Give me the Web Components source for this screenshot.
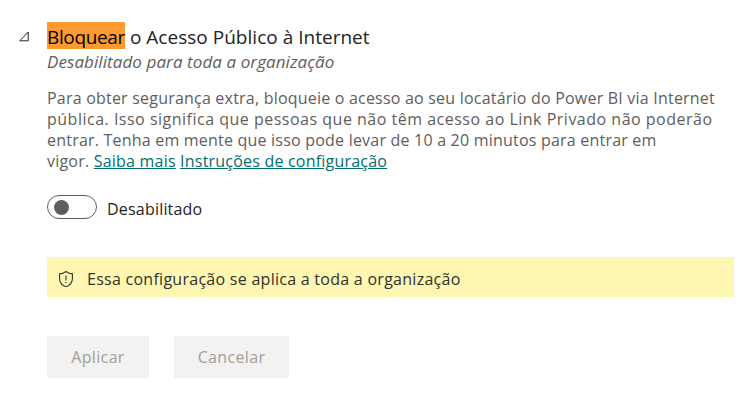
<!DOCTYPE html>
<html lang="pt">
<head>
<meta charset="utf-8">
<title>Bloquear</title>
<style>
  html,body{margin:0;padding:0;background:#fff;}
  body{font-family:"Open Sans","Noto Sans",sans-serif;color:#252423;width:751px;height:406px;overflow:hidden;}
</style>
</head>
<body>
<tenant-setting></tenant-setting>
<script>
class SettingToggle extends HTMLElement{
  constructor(){
    super();
    this.attachShadow({mode:'open'});
    this.shadowRoot.innerHTML=`
      <style>
        :host{display:flex;align-items:center;gap:10px;height:24px;}
        .track{width:50px;height:24px;box-sizing:border-box;border:1px solid #605e5c;border-radius:12px;display:flex;align-items:center;padding-left:6px;background:#fff;}
        .thumb{width:15px;height:15px;border-radius:50%;background:#605e5c;}
        span{margin-top:4px;font-size:16px;letter-spacing:.2px;color:#252423;}
      </style>
      <div class="track"><div class="thumb"></div></div>
      <span><slot></slot></span>`;
  }
}
customElements.define('setting-toggle',SettingToggle);

class InfoBar extends HTMLElement{
  constructor(){
    super();
    this.attachShadow({mode:'open'});
    this.shadowRoot.innerHTML=`
      <style>
        :host{display:flex;align-items:center;gap:13px;height:40px;background:#fef7b2;padding:4px 0 0 11px;width:687px;box-sizing:border-box;}
        svg{width:16px;height:16px;flex:none;}
        span{font-size:16px;letter-spacing:.27px;color:#323130;}
      </style>
      <svg viewBox="1.8 0.8 12.4 14" fill="none" stroke="#323130" stroke-width=".95">
        <path d="M8 1.2c1.6 1.3 3.4 2 5.6 2.1v4.2c0 3.2-2 5.6-5.6 7.2-3.6-1.6-5.6-4-5.6-7.2V3.3C4.6 3.2 6.4 2.5 8 1.2z"/>
        <path d="M8 4.8v4.4"/><path d="M8 10.4v1.2"/>
      </svg>
      <span><slot></slot></span>`;
  }
}
customElements.define('info-bar',InfoBar);

class FlatButton extends HTMLElement{
  constructor(){
    super();
    this.attachShadow({mode:'open'});
    this.shadowRoot.innerHTML=`
      <style>
        :host{display:flex;align-items:center;justify-content:center;height:42px;background:#f3f2f1;color:#a19f9d;font-size:16px;letter-spacing:.35px;}
      </style>
      <slot></slot>`;
  }
}
customElements.define('flat-button',FlatButton);

class TenantSetting extends HTMLElement{
  constructor(){
    super();
    this.attachShadow({mode:'open'});
    this.shadowRoot.innerHTML=`
      <style>
        :host{display:block;padding:22px 0 0 19px;}
        .head{display:flex;gap:18px;}
        .caret{width:10px;height:11px;margin-top:9px;flex:none;}
        h2{margin:3px 0 0;font-weight:400;font-size:19px;line-height:24px;letter-spacing:.02px;color:#252423;}
        mark{padding-top:2px;background:linear-gradient(#ff9a31 0 calc(100% - 1px),transparent 0);color:#000;letter-spacing:-.35px;}
        .sub{font-style:italic;font-size:17px;line-height:25px;letter-spacing:.08px;color:#605e5c;}
        .body{margin:0 0 0 28px;}
        p{margin:14px 0 0;width:690px;font-size:16px;line-height:21px;letter-spacing:.21px;color:#605e5c;}
        .wide{letter-spacing:.5px;}
        a{color:#00706d;text-decoration:underline;}
        setting-toggle{margin-top:23px;}
        info-bar{margin-top:38px;}
        .actions{display:flex;gap:25px;margin-top:39px;}
        .apply{width:102px;}
        .cancel{width:115px;}
      </style>
      <div class="head">
        <svg class="caret" viewBox="0 0 10 11" fill="none" stroke="#252423" stroke-width="1"><path d="M.8 9.8h8.4V1z"/></svg>
        <div>
          <h2><mark>Bloquear</mark> o Acesso Público à Internet</h2>
          <div class="sub">Desabilitado para toda a organização</div>
        </div>
      </div>
      <div class="body">
        <p>Para obter segurança extra, bloqueie o acesso ao seu locatário do Power BI via Internet<br><span class="wide">pública. Isso significa que pessoas que não têm acesso ao Link Privado não poderão</span><br>entrar. Tenha em mente que isso pode levar de 10 a 20 minutos para entrar em<br>vigor. <a href="#">Saiba mais</a> <a href="#">Instruções de configuração</a></p>
        <setting-toggle>Desabilitado</setting-toggle>
        <info-bar>Essa configuração se aplica a toda a organização</info-bar>
        <div class="actions">
          <flat-button class="apply">Aplicar</flat-button>
          <flat-button class="cancel">Cancelar</flat-button>
        </div>
      </div>`;
  }
}
customElements.define('tenant-setting',TenantSetting);
</script>
</body>
</html>
